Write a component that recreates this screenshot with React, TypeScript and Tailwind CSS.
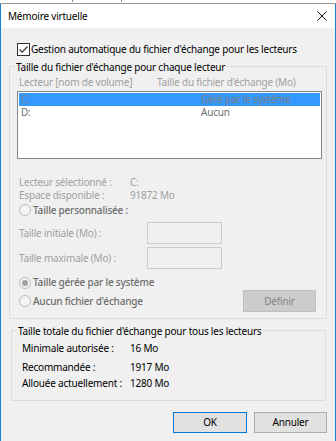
import React from "react";

function Radio({ checked }: { checked?: boolean }) {
  return (
    <span className="w-[12px] h-[12px] rounded-full border border-[#bcbcbc] bg-[#f4f4f4] flex items-center justify-center shrink-0">
      {checked && <span className="w-[6px] h-[6px] rounded-full bg-[#a3a3a3]" />}
    </span>
  );
}

function Group({ title, className, children }: { title: string; className: string; children: React.ReactNode }) {
  return (
    <div className={`border border-[#dcdcdc] flex flex-col ${className}`}>
      <span className="-mt-[8px] ml-[5px] px-[1px] w-fit bg-[#f0f0f0] leading-[16px] text-black">{title}</span>
      {children}
    </div>
  );
}

export default function App() {
  return (
    <div className="w-[336px] h-[441px] overflow-hidden bg-white flex flex-col font-['Noto_Sans',sans-serif] text-[10px] tracking-[-0.2px] text-black">
      {/* background window peeking out on top */}
      <div className="h-[4px] shrink-0 overflow-hidden border-b border-[#9a9a9a] bg-white">
        <div className="-mt-[10px] pl-[2px] flex text-[11px] leading-[12px] text-[#333] whitespace-nowrap">
          <span className="pr-[6px] border-r border-[#888]">Effets visuels</span>
          <span className="px-[6px] border-r border-[#888]">Avancé</span>
          <span className="px-[6px]">Prévention de l'exécution des données</span>
        </div>
      </div>

      <div className="flex-1 flex flex-col border-x border-[#1883d7]">
        <div className="h-[24px] shrink-0 bg-white flex items-center justify-between pl-[7px] pr-[8px]">
          <span className="leading-[16px]">Mémoire virtuelle</span>
          <svg width="10" height="10" viewBox="0 0 10 10">
            <path d="M0.5 0.5L9.5 9.5M9.5 0.5L0.5 9.5" stroke="#111" strokeWidth="1" />
          </svg>
        </div>

        <div className="flex-1 bg-[#f0f0f0] flex flex-col pt-[14px]">
          <div className="h-[14px] flex items-center pl-[16px] gap-[1px]">
            <span className="w-[13px] h-[13px] border border-[#333] bg-white flex items-center justify-center shrink-0">
              <svg width="11" height="11" viewBox="0 0 11 11">
                <path d="M1.5 5.5L4.2 8.2L9.5 2.5" fill="none" stroke="#333" strokeWidth="1.2" />
              </svg>
            </span>
            <span className="leading-[14px]">Gestion automatique du fichier d'échange pour les lecteurs</span>
          </div>

          <Group title="Taille du fichier d'échange pour chaque lecteur" className="mt-[10px] ml-[8px] w-[318px] pb-[6px]">
            <div className="h-[14px] flex items-center ml-[9px] text-[#a0a0a0]">
              <span className="w-[138px]">Lecteur [nom de volume]</span>
              <span>Taille du fichier d'échange (Mo)</span>
            </div>
            <div className="mt-[2px] ml-[7px] w-[305px] h-[68px] border border-[#828790] bg-white p-[1px] flex flex-col">
              <div className="h-[13px] bg-[#3399ff] flex items-center pl-[2px] text-[#7d7d7d]">
                <span className="w-[180px]">C:</span>
                <span>Géré par le système</span>
              </div>
              <div className="h-[13px] flex items-center pl-[2px] text-[#6d6d6d]">
                <span className="w-[180px]">D:</span>
                <span>Aucun</span>
              </div>
            </div>

            <div className="mt-[17px] h-[13px] flex items-center ml-[9px] text-[#a0a0a0]">
              <span className="w-[111px]">Lecteur sélectionné :</span>
              <span>C:</span>
            </div>
            <div className="h-[13px] flex items-center ml-[9px] text-[#a0a0a0]">
              <span className="w-[111px]">Espace disponible :</span>
              <span>91872 Mo</span>
            </div>
            <div className="h-[16px] flex items-center ml-[9px] gap-[2px] text-[#6d6d6d]">
              <Radio />
              <span className="font-medium">Taille personnalisée :</span>
            </div>
            <div className="mt-[4px] h-[22px] flex items-center ml-[9px] text-[#a0a0a0]">
              <span className="w-[128px]">Taille initiale (Mo) :</span>
              <span className="w-[75px] h-[22px] border border-[#cccccc]" />
            </div>
            <div className="mt-[3px] h-[22px] flex items-center ml-[9px] text-[#a0a0a0]">
              <span className="w-[128px]">Taille maximale (Mo) :</span>
              <span className="w-[75px] h-[22px] border border-[#cccccc]" />
            </div>
            <div className="mt-[6px] h-[15px] flex items-center ml-[9px] gap-[2px] text-[#6d6d6d]">
              <Radio checked />
              <span className="font-medium">Taille gérée par le système</span>
            </div>
            <div className="h-[22px] flex items-center ml-[9px] mr-[10px] gap-[2px] text-[#6d6d6d]">
              <Radio />
              <span className="font-medium">Aucun fichier d'échange</span>
              <span className="ml-auto w-[73px] h-[22px] bg-[#cccccc] border border-[#bfbfbf] flex items-center justify-center text-[#838383]">
                Définir
              </span>
            </div>
          </Group>

          <Group title="Taille totale du fichier d'échange pour tous les lecteurs" className="mt-[11px] ml-[10px] w-[315px] pb-[10px]">
            <div className="mt-[2px] h-[14px] flex items-center ml-[10px]">
              <span className="w-[108px]">Minimale autorisée :</span>
              <span>16 Mo</span>
            </div>
            <div className="mt-[5px] h-[14px] flex items-center ml-[10px]">
              <span className="w-[108px]">Recommandée :</span>
              <span>1917 Mo</span>
            </div>
            <div className="mt-[2px] h-[14px] flex items-center ml-[10px]">
              <span className="w-[108px]">Allouée actuellement :</span>
              <span>1280 Mo</span>
            </div>
          </Group>

          <div className="mt-[11px] flex justify-end gap-[7px] pr-[8px]">
            <span className="w-[74px] h-[21px] bg-[#e1e1e1] border border-[#0078d7] flex items-center justify-center">OK</span>
            <span className="w-[73px] h-[21px] bg-[#e1e1e1] border border-[#adadad] flex items-center justify-center">Annuler</span>
          </div>
        </div>
      </div>
    </div>
  );
}
